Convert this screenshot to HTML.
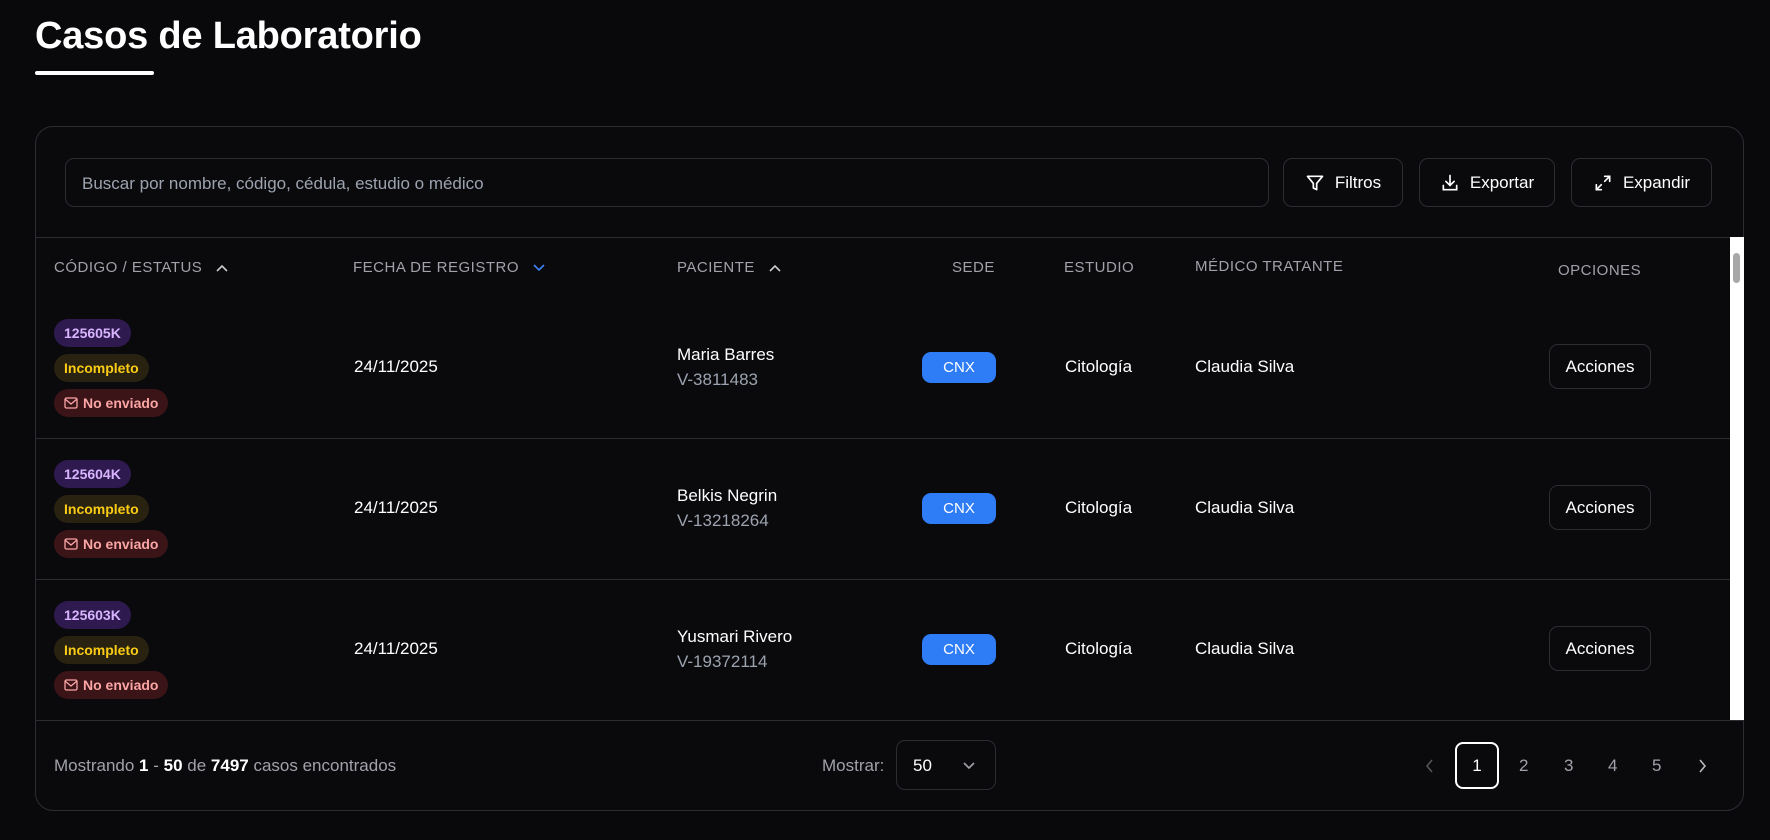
<!DOCTYPE html>
<html><head><meta charset="utf-8"><style>
*{box-sizing:border-box;margin:0;padding:0}
body{width:1770px;height:840px;background:#09090b;font-family:"Liberation Sans",sans-serif;color:#fff;position:relative;overflow:hidden}
.abs{position:absolute}
h1{position:absolute;left:35px;top:15px;font-size:38px;font-weight:700;letter-spacing:-0.2px}
.ul{left:35px;top:71px;width:119px;height:4px;background:#fff;border-radius:2px}
.card{left:35px;top:126px;width:1709px;height:685px;border:1px solid #2c2c33;border-radius:18px;background:#0a0a0d;overflow:hidden}
.search{left:65px;top:158px;width:1204px;height:49px;border:1px solid #2c2c33;border-radius:9px;color:#9ca3af;font-size:17px;padding:15px 0 0 16px}
.btn{height:49px;top:158px;border:1px solid #2c2c33;border-radius:9px;font-size:17px;display:flex;align-items:center;justify-content:center;gap:10px}
.hl{left:35px;width:1695px;height:1px;background:#2c2c33}
.th{top:259px;font-size:15px;color:#a1a1aa;letter-spacing:.5px;display:flex;align-items:center;gap:14px}
.badge{font-size:14px;font-weight:700;border-radius:14px;height:28px;padding:0 10px;display:flex;align-items:center;gap:5px}
.t{font-size:17px}
.sub{font-size:17px;color:#9ca3af}
.cnx{width:74px;height:31px;background:#2e7cf6;border-radius:9px;font-size:15px;display:flex;align-items:center;justify-content:center}
.acc{width:102px;height:45px;border:1px solid #2c2c33;border-radius:9px;font-size:17px;display:flex;align-items:center;justify-content:center}
.pg{font-size:17px;color:#a1a1aa;top:756px}
</style></head><body>
<h1>Casos de Laboratorio</h1>
<div class="abs ul"></div>
<div class="abs card"></div>
<div class="abs search">Buscar por nombre, código, cédula, estudio o médico</div>
<div class="abs btn" style="left:1283px;width:120px"><svg width="20" height="20" viewBox="0 0 24 24" fill="none" stroke="#fff" stroke-width="2" stroke-linejoin="round"><path d="M3 4h18l-7 8.5V20l-4-2v-5.5z"/></svg>Filtros</div>
<div class="abs btn" style="left:1419px;width:136px"><svg width="20" height="20" viewBox="0 0 24 24" fill="none" stroke="#fff" stroke-width="2" stroke-linecap="round"><path d="M12 3v12M7 10l5 5 5-5M4 15v5h16v-5"/></svg>Exportar</div>
<div class="abs btn" style="left:1571px;width:141px"><svg width="20" height="20" viewBox="0 0 24 24" fill="none" stroke="#fff" stroke-width="2" stroke-linecap="round"><path d="M14 4h6v6M20 4l-6 6M10 20H4v-6M4 20l6-6"/></svg>Expandir</div>
<div class="abs hl" style="top:237px"></div>
<div class="abs" style="left:1730px;top:237px;width:14px;height:483px;background:#fff"></div>
<div class="abs" style="left:1733px;top:253px;width:7px;height:30px;background:#a8a8a8;border-radius:4px"></div>

<div class="abs th" style="left:54px">CÓDIGO / ESTATUS <svg width="12" height="8" viewBox="0 0 12 8" fill="none" stroke="#ccc" stroke-width="1.6"><path d="M1 7l5-5 5 5"/></svg></div>
<div class="abs th" style="left:353px">FECHA DE REGISTRO <svg width="12" height="8" viewBox="0 0 12 8" fill="none" stroke="#3b82f6" stroke-width="1.6"><path d="M1 1l5 5 5-5"/></svg></div>
<div class="abs th" style="left:677px">PACIENTE <svg width="12" height="8" viewBox="0 0 12 8" fill="none" stroke="#ccc" stroke-width="1.6"><path d="M1 7l5-5 5 5"/></svg></div>
<div class="abs th" style="left:952px">SEDE</div>
<div class="abs th" style="left:1064px">ESTUDIO</div>
<div class="abs th" style="left:1195px;top:258px">MÉDICO TRATANTE</div>
<div class="abs th" style="left:1558px;top:262px">OPCIONES</div>

<div class="abs hl" style="top:438px"></div>
<div class="abs hl" style="top:579px"></div>
<div class="abs hl" style="top:720px;width:1709px"></div>

<!-- Row 1 -->
<div class="abs badge" style="left:54px;top:319px;background:#2e1a4f;color:#d8b4fe">125605K</div>
<div class="abs badge" style="left:54px;top:354px;background:#2a2210;color:#facc15">Incompleto</div>
<div class="abs badge" style="left:54px;top:389px;background:#3b1418;color:#fca5a5"><svg width="14" height="12" viewBox="0 0 14 12" fill="none" stroke="#fca5a5" stroke-width="1.3"><rect x="1" y="1" width="12" height="10" rx="1.5"/><path d="M1 2l6 5 6-5"/></svg>No enviado</div>
<div class="abs t" style="left:354px;top:357px">24/11/2025</div>
<div class="abs t" style="left:677px;top:345px">Maria Barres</div>
<div class="abs sub" style="left:677px;top:370px">V-3811483</div>
<div class="abs cnx" style="left:922px;top:352px">CNX</div>
<div class="abs t" style="left:1065px;top:357px">Citología</div>
<div class="abs t" style="left:1195px;top:357px">Claudia Silva</div>
<div class="abs acc" style="left:1549px;top:344px">Acciones</div>

<!-- Row 2 -->
<div class="abs badge" style="left:54px;top:460px;background:#2e1a4f;color:#d8b4fe">125604K</div>
<div class="abs badge" style="left:54px;top:495px;background:#2a2210;color:#facc15">Incompleto</div>
<div class="abs badge" style="left:54px;top:530px;background:#3b1418;color:#fca5a5"><svg width="14" height="12" viewBox="0 0 14 12" fill="none" stroke="#fca5a5" stroke-width="1.3"><rect x="1" y="1" width="12" height="10" rx="1.5"/><path d="M1 2l6 5 6-5"/></svg>No enviado</div>
<div class="abs t" style="left:354px;top:498px">24/11/2025</div>
<div class="abs t" style="left:677px;top:486px">Belkis Negrin</div>
<div class="abs sub" style="left:677px;top:511px">V-13218264</div>
<div class="abs cnx" style="left:922px;top:493px">CNX</div>
<div class="abs t" style="left:1065px;top:498px">Citología</div>
<div class="abs t" style="left:1195px;top:498px">Claudia Silva</div>
<div class="abs acc" style="left:1549px;top:485px">Acciones</div>

<!-- Row 3 -->
<div class="abs badge" style="left:54px;top:601px;background:#2e1a4f;color:#d8b4fe">125603K</div>
<div class="abs badge" style="left:54px;top:636px;background:#2a2210;color:#facc15">Incompleto</div>
<div class="abs badge" style="left:54px;top:671px;background:#3b1418;color:#fca5a5"><svg width="14" height="12" viewBox="0 0 14 12" fill="none" stroke="#fca5a5" stroke-width="1.3"><rect x="1" y="1" width="12" height="10" rx="1.5"/><path d="M1 2l6 5 6-5"/></svg>No enviado</div>
<div class="abs t" style="left:354px;top:639px">24/11/2025</div>
<div class="abs t" style="left:677px;top:627px">Yusmari Rivero</div>
<div class="abs sub" style="left:677px;top:652px">V-19372114</div>
<div class="abs cnx" style="left:922px;top:634px">CNX</div>
<div class="abs t" style="left:1065px;top:639px">Citología</div>
<div class="abs t" style="left:1195px;top:639px">Claudia Silva</div>
<div class="abs acc" style="left:1549px;top:626px">Acciones</div>

<!-- footer -->
<div class="abs pg" style="left:54px">Mostrando <b style="color:#fff">1</b> - <b style="color:#fff">50</b> de <b style="color:#fff">7497</b> casos encontrados</div>
<div class="abs pg" style="left:822px">Mostrar:</div>
<div class="abs" style="left:896px;top:740px;width:100px;height:50px;border:1px solid #2c2c33;border-radius:9px;font-size:17px;padding:15px 0 0 16px">50<svg style="position:absolute;left:66px;top:21px" width="12" height="8" viewBox="0 0 12 8" fill="none" stroke="#a1a1aa" stroke-width="1.6"><path d="M1 1l5 5 5-5"/></svg></div>
<svg class="abs" style="left:1426px;top:759px" width="8" height="14" viewBox="0 0 8 14" fill="none" stroke="#555" stroke-width="1.6"><path d="M6 1L1 7l5 6"/></svg>
<div class="abs" style="left:1455px;top:742px;width:44px;height:47px;border:2px solid #fff;border-radius:8px;font-size:17px;display:flex;align-items:center;justify-content:center">1</div>
<div class="abs pg" style="left:1519px">2</div>
<div class="abs pg" style="left:1564px">3</div>
<div class="abs pg" style="left:1608px">4</div>
<div class="abs pg" style="left:1652px">5</div>
<svg class="abs" style="left:1698px;top:759px" width="8" height="14" viewBox="0 0 8 14" fill="none" stroke="#bbb" stroke-width="1.6"><path d="M2 1l5 6-5 6"/></svg>
</body></html>
